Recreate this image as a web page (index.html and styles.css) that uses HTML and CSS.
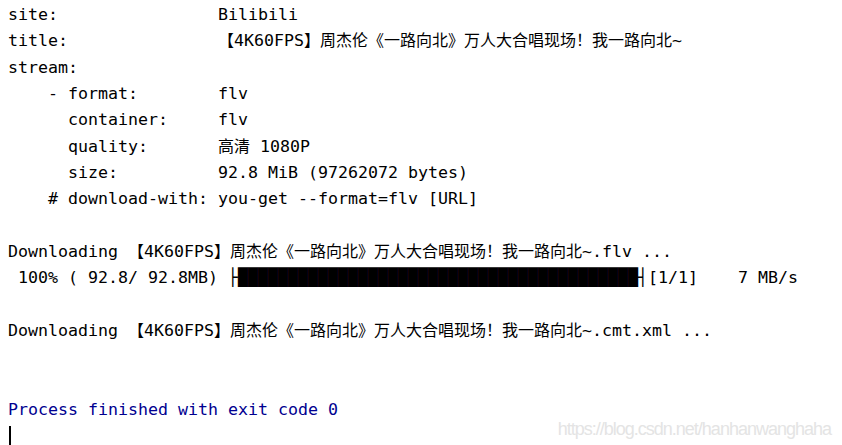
FILE: index.html
```html
<!DOCTYPE html>
<html lang="zh">
<head>
<meta charset="utf-8">
<title>you-get output</title>
<link rel="stylesheet" href="styles.css">
</head>
<body>
<main class="console">
<div class="line">site:                Bilibili</div>
<div class="line">title:               <span class="cjk">【</span>4K60FPS<span class="cjk">】周杰伦《一路向北》万人大合唱现场！我一路向北</span>~</div>
<div class="line">stream:</div>
<div class="line">    - format:        flv</div>
<div class="line">      container:     flv</div>
<div class="line">      quality:       <span class="cjk">高清</span> 1080P</div>
<div class="line">      size:          92.8 MiB (97262072 bytes)</div>
<div class="line">    # download-with: you-get --format=flv [URL]</div>
<div class="line"></div>
<div class="line">Downloading <span class="cjk">【</span>4K60FPS<span class="cjk">】周杰伦《一路向北》万人大合唱现场！我一路向北</span>~.flv ...</div>
<div class="line"> 100% ( 92.8/ 92.8MB) ├<span class="bar">████████████████████████████████████████</span>┤[1/1]    7 MB/s</div>
<div class="line"></div>
<div class="line">Downloading <span class="cjk">【</span>4K60FPS<span class="cjk">】周杰伦《一路向北》万人大合唱现场！我一路向北</span>~.cmt.xml ...</div>
<div class="line"></div>
<div class="line"></div>
<div class="line system">Process finished with exit code 0</div>
<div class="line"><span class="cursor"></span></div>
</main>
<div class="watermark">https://blog.csdn.net/hanhanwanghaha</div>
</body>
</html>
```
FILE: styles.css
```css
html, body {
  margin: 0;
  padding: 0;
  background: #ffffff;
  overflow: hidden;
}

body {
  width: 842px;
  height: 445px;
  position: relative;
}

.console {
  padding: 2px 0 0 8px;
  font-family: "DejaVu Sans Mono", "Liberation Mono", monospace;
  font-size: 16.61px;
  color: #000000;
}

.line {
  height: 26.33px;
  line-height: 26.33px;
  white-space: pre;
  overflow: visible;
}

.cjk {
  font-family: "Noto Sans CJK SC", sans-serif;
  font-size: 16px;
  line-height: 16px;
}

.bar {
  color: #000000;
}

.system {
  color: #000090;
}

.cursor {
  display: inline-block;
  width: 2px;
  height: 21px;
  margin-left: 1px;
  background: #000000;
  vertical-align: -6px;
}

.watermark {
  position: absolute;
  right: 11px;
  top: 419px;
  font-family: "Liberation Sans", Arial, sans-serif;
  font-size: 18px;
  letter-spacing: -1px;
  line-height: 20px;
  color: #e4e4e4;
  white-space: nowrap;
}
```
